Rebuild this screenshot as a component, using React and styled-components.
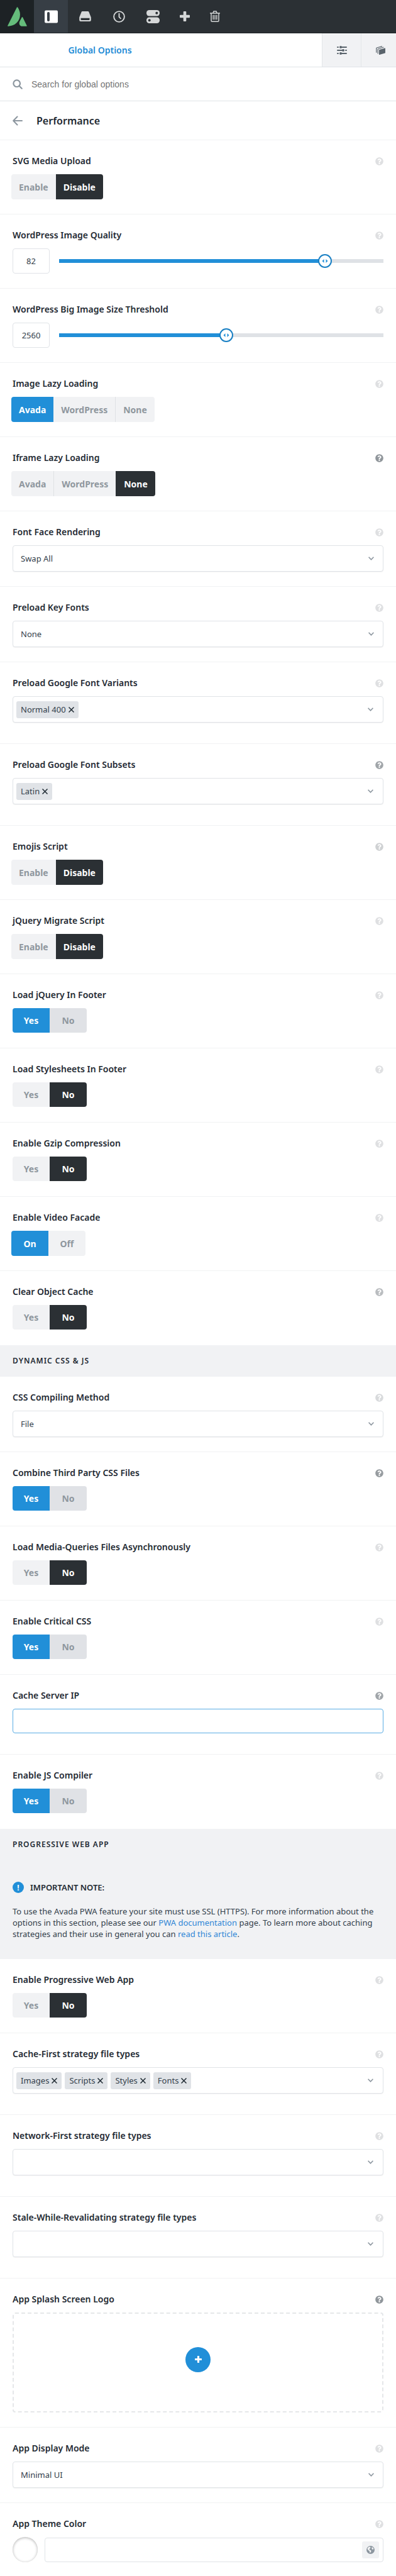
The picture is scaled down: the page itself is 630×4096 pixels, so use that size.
import React, { useId, useState } from 'react'
import styled, { createGlobalStyle, css } from 'styled-components'

const GlobalStyle = createGlobalStyle`
*, *::before, *::after{
  box-sizing: border-box;
}
body{
  margin: 0;
  background: #fff;
  color: #33404b;
  font-family: 'Noto Sans', sans-serif;
  font-size: 13px;
}
button, input, select{
  font: inherit;
  color: inherit;
}
`

const TopBar = styled.header`
display: flex;
height: 53px;
background: #2b3034;
border-bottom: 1px solid #1d2225;
`

const BarButton = styled.button`
display: flex;
align-items: center;
justify-content: center;
width: ${props => props.$narrow ? '48px' : '54px'};
padding: 0;
border: none;
background: ${props => props.$bg || 'transparent'};
color: ${props => props.$active ? '#fff' : '#d5d7d8'};
cursor: pointer;
`

const Tabs = styled.nav`
display: flex;
height: 54px;
border-bottom: 1px solid #e0e3e7;
`

const MainTab = styled.button`
flex: 1;
border: none;
padding: 0;
background: #fff;
color: #1f8cd6;
font-weight: 600;
font-size: 14px;
`

const MainTabLabel = styled.span`
display: block;
width: 318px;
text-align: center;
`

const IconTab = styled.button`
display: flex;
align-items: center;
justify-content: center;
width: 62px;
padding: 0;
border: none;
border-left: 1px solid #e3e6e9;
background: #f1f2f4;
color: #5a646c;
&:last-child{
width: 56px;
padding-left: 6px;
}
`

const SearchBar = styled.label`
display: flex;
align-items: center;
gap: 14px;
height: 54px;
padding: 0 20px;
border-bottom: 1px solid #e0e3e7;
color: #8c969f;
`

const SearchInput = styled.input`
flex: 1;
padding: 0;
border: none;
outline: none;
background: transparent;
font-family: 'Liberation Sans', sans-serif;
font-size: 14px;
&::placeholder{
color: #757575;
opacity: 1;
}
`

const PanelHeader = styled.div`
display: flex;
align-items: center;
gap: 22px;
height: 62px;
padding: 0 20px;
border-bottom: 1px solid #f1f2f3;
`

const BackButton = styled.button`
display: flex;
padding: 0;
border: none;
background: none;
color: #8c969f;
`

const PanelTitle = styled.h1`
margin: 0;
font-size: 16px;
font-weight: 600;
line-height: 20px;
color: #1f2a33;
`

const OptionRow = styled.section`
padding: 23px 20px ${props => props.$tall ? '33px' : '23px'};
border-bottom: 1px solid #f1f2f3;
&:has(+ h2){
border-bottom-color: transparent;
}
&:last-child{
padding-bottom: 20px;
border-bottom: none;
}
`

const OptionHead = styled.div`
display: flex;
align-items: center;
justify-content: space-between;
height: 20px;
margin-bottom: 11px;
`

const OptionTitle = styled.h3`
margin: 0;
font-size: 14px;
font-weight: 600;
line-height: 20px;
color: #1f2a33;
`

const HelpButton = styled.button`
display: flex;
padding: 0;
border: none;
background: none;
color: ${props => props.$tone || '#dfe0e2'};
cursor: pointer;
`

const Segments = styled.div`
display: flex;
min-height: 40px;
align-items: flex-start;
margin: 0 ${props => props.$wide ? '-2px' : '0'};
`

const Segment = styled.button`
height: ${props => props.$wide ? '40px' : '39px'};
min-width: 59px;
padding: 0 12px;
border: none;
border-left: ${props => props.$divided ? '1px solid #dfe1e4' : 'none'};
background: #f1f2f4;
color: #8f979e;
font-size: 14px;
font-weight: 700;
cursor: pointer;
&:first-child{
border-radius: 4px 0 0 4px;
}
&:last-child{
border-radius: 0 4px 4px 0;
}
${props => props.$muted && css`
background: #e0e2e6;
`}
${props => props.$on && css`
background: ${props.$on};
border-color: ${props.$on};
color: #fff;
`}
`

const SliderRow = styled.div`
display: flex;
align-items: center;
gap: 15px;
height: 40px;
`

const NumberBox = styled.input`
width: 59px;
height: 40px;
padding: 0;
border: 1px solid #e0e3e7;
border-radius: 4px;
background: #fff;
text-align: center;
`

const Track = styled.div`
position: relative;
flex: 1;
height: 6px;
background: #dfe2e6;
`

const TrackFill = styled.div`
height: 6px;
background: #218fd8;
`

// wider than the track, so that the handle's centre can reach both ends
const Range = styled.input`
appearance: none;
position: absolute;
top: -8px;
left: -11px;
width: calc(100% + 22px);
height: 22px;
margin: 0;
background: transparent;
&::-webkit-slider-thumb{
appearance: none;
width: 22px;
height: 22px;
border: 2px solid #1a80c4;
border-radius: 50%;
background: #fff;
}
`

const Grip = styled.svg`
position: absolute;
top: 0;
transform: translateX(-50%);
pointer-events: none;
`

const boxed = css`
border: 1px solid #e0e3e7;
border-radius: 4px;
background: #fff;
`

const SelectWrap = styled.div`
position: relative;
display: flex;
`

const Select = styled.select`
${boxed}
appearance: none;
width: 100%;
height: 42px;
padding: 0 12px;
box-shadow: 0 1px 1px rgba(0, 0, 0, .05);
`

const Caret = styled.svg`
position: absolute;
right: 15px;
top: 50%;
transform: translateY(-50%);
pointer-events: none;
`

const MultiBox = styled.div`
${boxed}
position: relative;
display: flex;
align-items: center;
gap: 5px;
height: 42px;
padding: 0 5px;
box-shadow: 0 1px 1px rgba(0, 0, 0, .05);
`

const Tag = styled.span`
display: flex;
align-items: center;
gap: 4px;
height: 27px;
padding: 0 7px;
border-radius: 3px;
background: #e0e3e7;
`

const TagRemove = styled.button`
display: flex;
padding: 0;
border: none;
background: none;
color: #1f2a33;
cursor: pointer;
`

const TextBox = styled.input`
${boxed}
display: block;
width: 100%;
height: 39px;
padding: 0 12px;
border-color: ${props => props.$accent ? '#5aade4' : '#e0e3e7'};
outline: none;
`

const Upload = styled.button`
display: flex;
align-items: center;
justify-content: center;
width: 100%;
height: 159px;
padding: 0 0 10px;
border: 2px dashed #e5e7e9;
border-radius: 4px;
background: #fff;
cursor: pointer;
`

const PlusDisc = styled.span`
display: flex;
align-items: center;
justify-content: center;
width: 40px;
height: 40px;
border-radius: 50%;
background: #218fd8;
color: #fff;
`

const ColorRow = styled.div`
display: flex;
align-items: center;
gap: 11px;
height: 40px;
`

const Swatch = styled.button`
width: 40px;
height: 40px;
border: none;
border-radius: 50%;
background: #fff;
box-shadow: inset 0 1px 4px rgba(0, 0, 0, .3), 0 0 1px rgba(0, 0, 0, .1);
`

const ColorField = styled.div`
position: relative;
flex: 1;
`

const GlobeButton = styled.button`
position: absolute;
right: 7px;
top: 6px;
display: flex;
align-items: center;
justify-content: center;
width: 27px;
height: 27px;
padding: 0;
border: none;
border-radius: 3px;
background: #f1f2f4;
color: #8c969f;
`

const SectionTitle = styled.h2`
margin: 0;
padding: 15px 20px;
background: #f1f2f4;
font-size: 12px;
font-weight: 600;
line-height: 20px;
letter-spacing: 1px;
text-transform: uppercase;
color: #1f2a33;
`

const Notice = styled.aside`
padding: 33px 20px 31px;
background: #f1f2f4;
p{
margin: 0;
line-height: 18px;
}
a{
color: #2f86d6;
text-decoration: none;
}
`

const NoticeTitle = styled.h3`
display: flex;
align-items: center;
gap: 10px;
height: 20px;
margin: 0 0 19px;
font-size: 13px;
font-weight: 600;
color: #1f2a33;
`

const NoticeBadge = styled.span`
display: flex;
align-items: center;
justify-content: center;
width: 18px;
height: 18px;
border-radius: 50%;
background: #218fd8;
color: #fff;
font-size: 12px;
font-weight: 700;
`

const LogoIcon = () => (
    <svg width="31" height="31" viewBox="66 60 176 176">
        <path fill="#65bc7b" d="M150 64q4-5 8 0c14 22 21 42 21 66 0 58-42 100-106 105q-8 0-5-7z" />
        <path fill="#65bc7b" d="M195 154q4-5 8 0l37 75q3 6-3 6h-37c-17 0-28-12-28-29 0-8 3-15 6-20z" />
    </svg>
)

const PanelIcon = () => (
    <svg width="21" height="21" viewBox="0 0 21 21">
        <rect x="0" y="0.500" width="21" height="20" rx="2" fill="currentColor" />
        <rect x="4" y="3" width="4" height="15" rx="2" fill="#373e45" />
    </svg>
)

const DriveIcon = () => (
    <svg width="19" height="16" viewBox="0 0 19 16">
        <path fillRule="evenodd" fill="currentColor" d="M5 0h9q1 0 1.400 1L18.800 9.500V14q0 2-2 2H2.200q-2 0-2-2V9.500L3.600 1Q4 0 5 0zM2.500 10.800V13q0 1 1 1h12q1 0 1-1v-2.200z" />
    </svg>
)

const ClockIcon = () => (
    <svg width="19" height="19" viewBox="0 0 20 20" fill="none" stroke="currentColor" strokeWidth="2" strokeLinecap="round">
        <circle cx="10" cy="10" r="8.800" />
        <path d="M10 5v5.500l2.500 2.500" />
    </svg>
)

const TogglesIcon = () => (
    <svg width="21" height="21" viewBox="0 0 21 21">
        <rect x="0" y="0" width="21" height="9.500" rx="4.500" fill="currentColor" />
        <rect x="0" y="11.500" width="21" height="9.500" rx="4.500" fill="currentColor" />
        <circle cx="16.300" cy="4.700" r="2" fill="#2b3034" />
        <circle cx="4.700" cy="16.300" r="2" fill="#2b3034" />
    </svg>
)

const PlusIcon = ({ size }) => (
    <svg width={size} height={size} viewBox="0 0 16 16">
        <path fill="currentColor" d="M5.700 1q0-1 1-1h2.600q1 0 1 1v4.700H15q1 0 1 1v2.600q0 1-1 1h-4.700V15q0 1-1 1H6.700q-1 0-1-1v-4.700H1q-1 0-1-1V6.700q0-1 1-1h4.700z" />
    </svg>
)

const TrashIcon = () => (
    <svg width="16" height="18" viewBox="0 0 16 18" fill="none" stroke="currentColor" strokeWidth="1.500">
        <path d="M0 4h16M4.800 4l1.200-3h4l1.200 3M2 4v11.700q0 1.500 1.500 1.500h9q1.500 0 1.500-1.500V4M5.200 6.800v7.400M8 6.800v7.400M10.800 6.800v7.400" />
    </svg>
)

const SlidersIcon = () => (
    <svg width="16" height="14" viewBox="0 0 16 14">
        <path fill="none" stroke="currentColor" strokeWidth="2" strokeLinecap="round" d="M1 2h1M6 2h9M1 7h9M14 7h1M1 12h1M6 12h9" />
        <path fill="none" stroke="currentColor" strokeWidth="4" strokeLinecap="round" d="M6 2h.01M10 7h.01M6 12h.01" />
    </svg>
)

const StackIcon = () => (
    <svg width="15" height="14" viewBox="0 0 15 14">
        <path fill="currentColor" d="M5 6.800q0-.6.600-.8L14.200 3.500q.8-.2.800.6v6.600q0 .7-.6.900L5.800 14q-.8.200-.8-.6z" />
        <path d="M3.200 12.500V5.600Q3.200 5 3.800 4.800L12.500 2M0.800 10.800V3.800Q.8 3.200 1.400 3L10 .6" fill="none" stroke="currentColor" strokeWidth="1.200" />
    </svg>
)

const SearchIcon = () => (
    <svg width="16" height="16" viewBox="0 0 16 16" fill="none" stroke="currentColor" strokeWidth="2.200" strokeLinecap="round">
        <circle cx="6.700" cy="6.700" r="5.300" />
        <path d="M10.700 10.700l4 4" />
    </svg>
)

const ArrowIcon = () => (
    <svg width="16" height="16" viewBox="0 0 16 16" fill="none" stroke="currentColor" strokeWidth="2" strokeLinecap="round" strokeLinejoin="round">
        <path d="M15 8H1.500M7.500 1.500L1.200 8l6.300 6.500" />
    </svg>
)

const HelpIcon = () => (
    <svg width="13" height="13" viewBox="0 0 512 512">
        <path fill="currentColor" d="M504 256c0 137-111 248-248 248S8 393 8 256 119 8 256 8s248 111 248 248zM262.700 90c-54.500 0-89.300 23-116.500 63.800-3.500 5.300-2.400 12.400 2.700 16.300l34.700 26.300c5.200 3.900 12.600 3 16.700-2.100 17.900-22.700 30.100-35.800 57.300-35.800 20.400 0 45.700 13.100 45.700 33 0 15-12.400 22.700-32.500 34C247 238.500 216 254.900 216 296v4c0 6.600 5.400 12 12 12h56c6.600 0 12-5.400 12-12v-1.300c0-28.500 83.200-29.600 83.200-106.700 0-58-60.200-102-116.500-102zM256 338c-25.400 0-46 20.600-46 46s20.600 46 46 46 46-20.600 46-46-20.600-46-46-46z" />
    </svg>
)

const CloseIcon = () => (
    <svg width="9" height="9" viewBox="0 0 9 9" stroke="currentColor" strokeWidth="1.500">
        <path d="M0.500 0.500l8 8M8.500 0.500l-8 8" />
    </svg>
)

const CaretIcon = () => (
    <Caret width="9" height="6" viewBox="0 0 9 6" fill="none" stroke="#8c969f" strokeWidth="1.600">
        <path d="M0.600 0.800L4.500 4.800 8.400 0.800" />
    </Caret>
)

const GlobeIcon = () => (
    <svg width="13" height="13" viewBox="0 0 13 13">
        <circle cx="6.500" cy="6.500" r="6.500" fill="currentColor" />
        <path fill="#f1f2f4" d="M2 3.500L4 1.500l2.500.3L6 4 4.500 5 5 6.500l2 .5.500 2-1.500 2-1-.5V8.500L3 7 1.500 5zM8.500 2l2 1 1 2-1.500 1L8.500 5z" />
    </svg>
)

const Field = ({ title, tone, tall, children }) => {
    const id = useId()

    return (
        <OptionRow $tall={tall} aria-labelledby={id}>
            <OptionHead>
                <OptionTitle id={id}>{title}</OptionTitle>
                <HelpButton $tone={tone} aria-label="Help"><HelpIcon /></HelpButton>
            </OptionHead>
            {children(id)}
        </OptionRow>
    )
}

const BLUE = '#218fd8'
const DARK = '#2b3034'

const Choice = ({ title, tone, options, value }) => {
    const [current, setCurrent] = useState(value)
    const isYesNo = options[0] === 'Yes'
    const color = current === options[0] ? BLUE : DARK

    return (
        <Field title={title} tone={tone}>
            {id => (
                <Segments role="group" aria-labelledby={id} $wide={!isYesNo}>
                    {options.map((option, i) => (
                        <Segment
                        key={option}
                        $wide={!isYesNo}
                        $on={option === current ? color : null}
                        $muted={isYesNo && option === 'No'}
                        $divided={options.length > 2 && i > 0 && options[i - 1] !== current}
                        aria-pressed={option === current}
                        onClick={() => setCurrent(option)}
                        >
                            {option}
                        </Segment>
                    ))}
                </Segments>
            )}
        </Field>
    )
}

const Slider = ({ title, value, min, max }) => {
    const [current, setCurrent] = useState(value)
    const percent = `${(current - min) / (max - min) * 100}%`

    return (
        <Field title={title}>
            {id => (
                <SliderRow>
                    <NumberBox aria-labelledby={id} value={current} onChange={e => setCurrent(e.target.value)} />
                    <Track>
                        <TrackFill style={{ width: percent }} />
                        <Range
                        type="range"
                        aria-labelledby={id}
                        min={min}
                        max={max}
                        value={current}
                        onChange={e => setCurrent(e.target.value)}
                        />
                        <Grip width="10" height="6" viewBox="0 0 10 6" style={{ left: percent }}>
                            <path fill={BLUE} d="M3.500 0v6L0.500 3zM6.500 0v6l3-3z" />
                        </Grip>
                    </Track>
                </SliderRow>
            )}
        </Field>
    )
}

const Dropdown = ({ title, tone, value }) => (
    <Field title={title} tone={tone}>
        {id => (
            <SelectWrap>
                <Select aria-labelledby={id} defaultValue={value}>
                    <option>{value}</option>
                </Select>
                <CaretIcon />
            </SelectWrap>
        )}
    </Field>
)

const MultiSelect = ({ title, tone, values }) => {
    const [tags, setTags] = useState(values)

    return (
        <Field title={title} tone={tone} tall>
            {id => (
                <MultiBox role="group" aria-labelledby={id}>
                    {tags.map(tag => (
                        <Tag key={tag}>
                            {tag}
                            <TagRemove aria-label={`Remove ${tag}`} onClick={() => setTags(tags.filter(t => t !== tag))}>
                                <CloseIcon />
                            </TagRemove>
                        </Tag>
                    ))}
                    <CaretIcon />
                </MultiBox>
            )}
        </Field>
    )
}

const enableDisable = ['Enable', 'Disable']
const lazy = ['Avada', 'WordPress', 'None']
const yesNo = ['Yes', 'No']

const App = () => {
    return (
        <>
            <GlobalStyle />
            <TopBar>
                <BarButton $bg="#1d2225" aria-label="Avada"><LogoIcon /></BarButton>
                <BarButton $bg="#373e45" $active aria-label="Toggle panel"><PanelIcon /></BarButton>
                <BarButton aria-label="Library"><DriveIcon /></BarButton>
                <BarButton aria-label="History"><ClockIcon /></BarButton>
                <BarButton aria-label="Preferences"><TogglesIcon /></BarButton>
                <BarButton $narrow aria-label="Add"><PlusIcon size={16} /></BarButton>
                <BarButton $narrow aria-label="Clear"><TrashIcon /></BarButton>
            </TopBar>
            <Tabs>
                <MainTab><MainTabLabel>Global Options</MainTabLabel></MainTab>
                <IconTab aria-label="Page options"><SlidersIcon /></IconTab>
                <IconTab aria-label="Layers"><StackIcon /></IconTab>
            </Tabs>
            <SearchBar>
                <SearchIcon />
                <SearchInput aria-label="Search" placeholder="Search for global options" />
            </SearchBar>
            <PanelHeader>
                <BackButton aria-label="Back"><ArrowIcon /></BackButton>
                <PanelTitle>Performance</PanelTitle>
            </PanelHeader>

            <main>
                <Choice title="SVG Media Upload" options={enableDisable} value="Disable" />
                <Slider title="WordPress Image Quality" value={82} min={0} max={100} />
                <Slider title="WordPress Big Image Size Threshold" value={2560} min={0} max={4960} />
                <Choice title="Image Lazy Loading" options={lazy} value="Avada" />
                <Choice title="Iframe Lazy Loading" tone="#90969b" options={lazy} value="None" />
                <Dropdown title="Font Face Rendering" value="Swap All" />
                <Dropdown title="Preload Key Fonts" value="None" />
                <MultiSelect title="Preload Google Font Variants" values={['Normal 400']} />
                <MultiSelect title="Preload Google Font Subsets" tone="#a0a5a9" values={['Latin']} />
                <Choice title="Emojis Script" tone="#cfd1d3" options={enableDisable} value="Disable" />
                <Choice title="jQuery Migrate Script" options={enableDisable} value="Disable" />
                <Choice title="Load jQuery In Footer" options={yesNo} value="Yes" />
                <Choice title="Load Stylesheets In Footer" options={yesNo} value="No" />
                <Choice title="Enable Gzip Compression" options={yesNo} value="No" />
                <Choice title="Enable Video Facade" options={['On', 'Off']} value="On" />
                <Choice title="Clear Object Cache" tone="#babdc0" options={yesNo} value="No" />
                <SectionTitle>Dynamic CSS &amp; JS</SectionTitle>
                <Dropdown title="CSS Compiling Method" tone="#d8dadc" value="File" />
                <Choice title="Combine Third Party CSS Files" tone="#979ca0" options={yesNo} value="Yes" />
                <Choice title="Load Media-Queries Files Asynchronously" options={yesNo} value="No" />
                <Choice title="Enable Critical CSS" options={yesNo} value="Yes" />
                <Field title="Cache Server IP" tone="#a0a5a9" tall>
                    {id => <TextBox $accent type="text" aria-labelledby={id} />}
                </Field>
                <Choice title="Enable JS Compiler" options={yesNo} value="Yes" />
                <SectionTitle>Progressive Web App</SectionTitle>
                <Notice>
                    <NoticeTitle><NoticeBadge>!</NoticeBadge>IMPORTANT NOTE:</NoticeTitle>
                    <p>
                        To use the Avada PWA feature your site must use SSL (HTTPS). For more information about the
                        options in this section, please see our <a href="#pwa">PWA documentation</a> page. To learn more about caching
                        strategies and their use in general you can <a href="#article">read this article</a>.
                    </p>
                </Notice>
                <Choice title="Enable Progressive Web App" options={yesNo} value="No" />
                <MultiSelect title="Cache-First strategy file types" values={['Images', 'Scripts', 'Styles', 'Fonts']} />
                <MultiSelect title="Network-First strategy file types" values={[]} />
                <MultiSelect title="Stale-While-Revalidating strategy file types" values={[]} />
                <Field title="App Splash Screen Logo" tone="#90969b">
                    {id => <Upload aria-labelledby={id}><PlusDisc><PlusIcon size={11} /></PlusDisc></Upload>}
                </Field>
                <Dropdown title="App Display Mode" value="Minimal UI" />
                <Field title="App Theme Color">
                    {id => (
                        <ColorRow>
                            <Swatch aria-label="Pick color" />
                            <ColorField>
                                <TextBox type="text" aria-labelledby={id} />
                                <GlobeButton aria-label="Global colors"><GlobeIcon /></GlobeButton>
                            </ColorField>
                        </ColorRow>
                    )}
                </Field>
            </main>
        </>
    )
}

export default App
